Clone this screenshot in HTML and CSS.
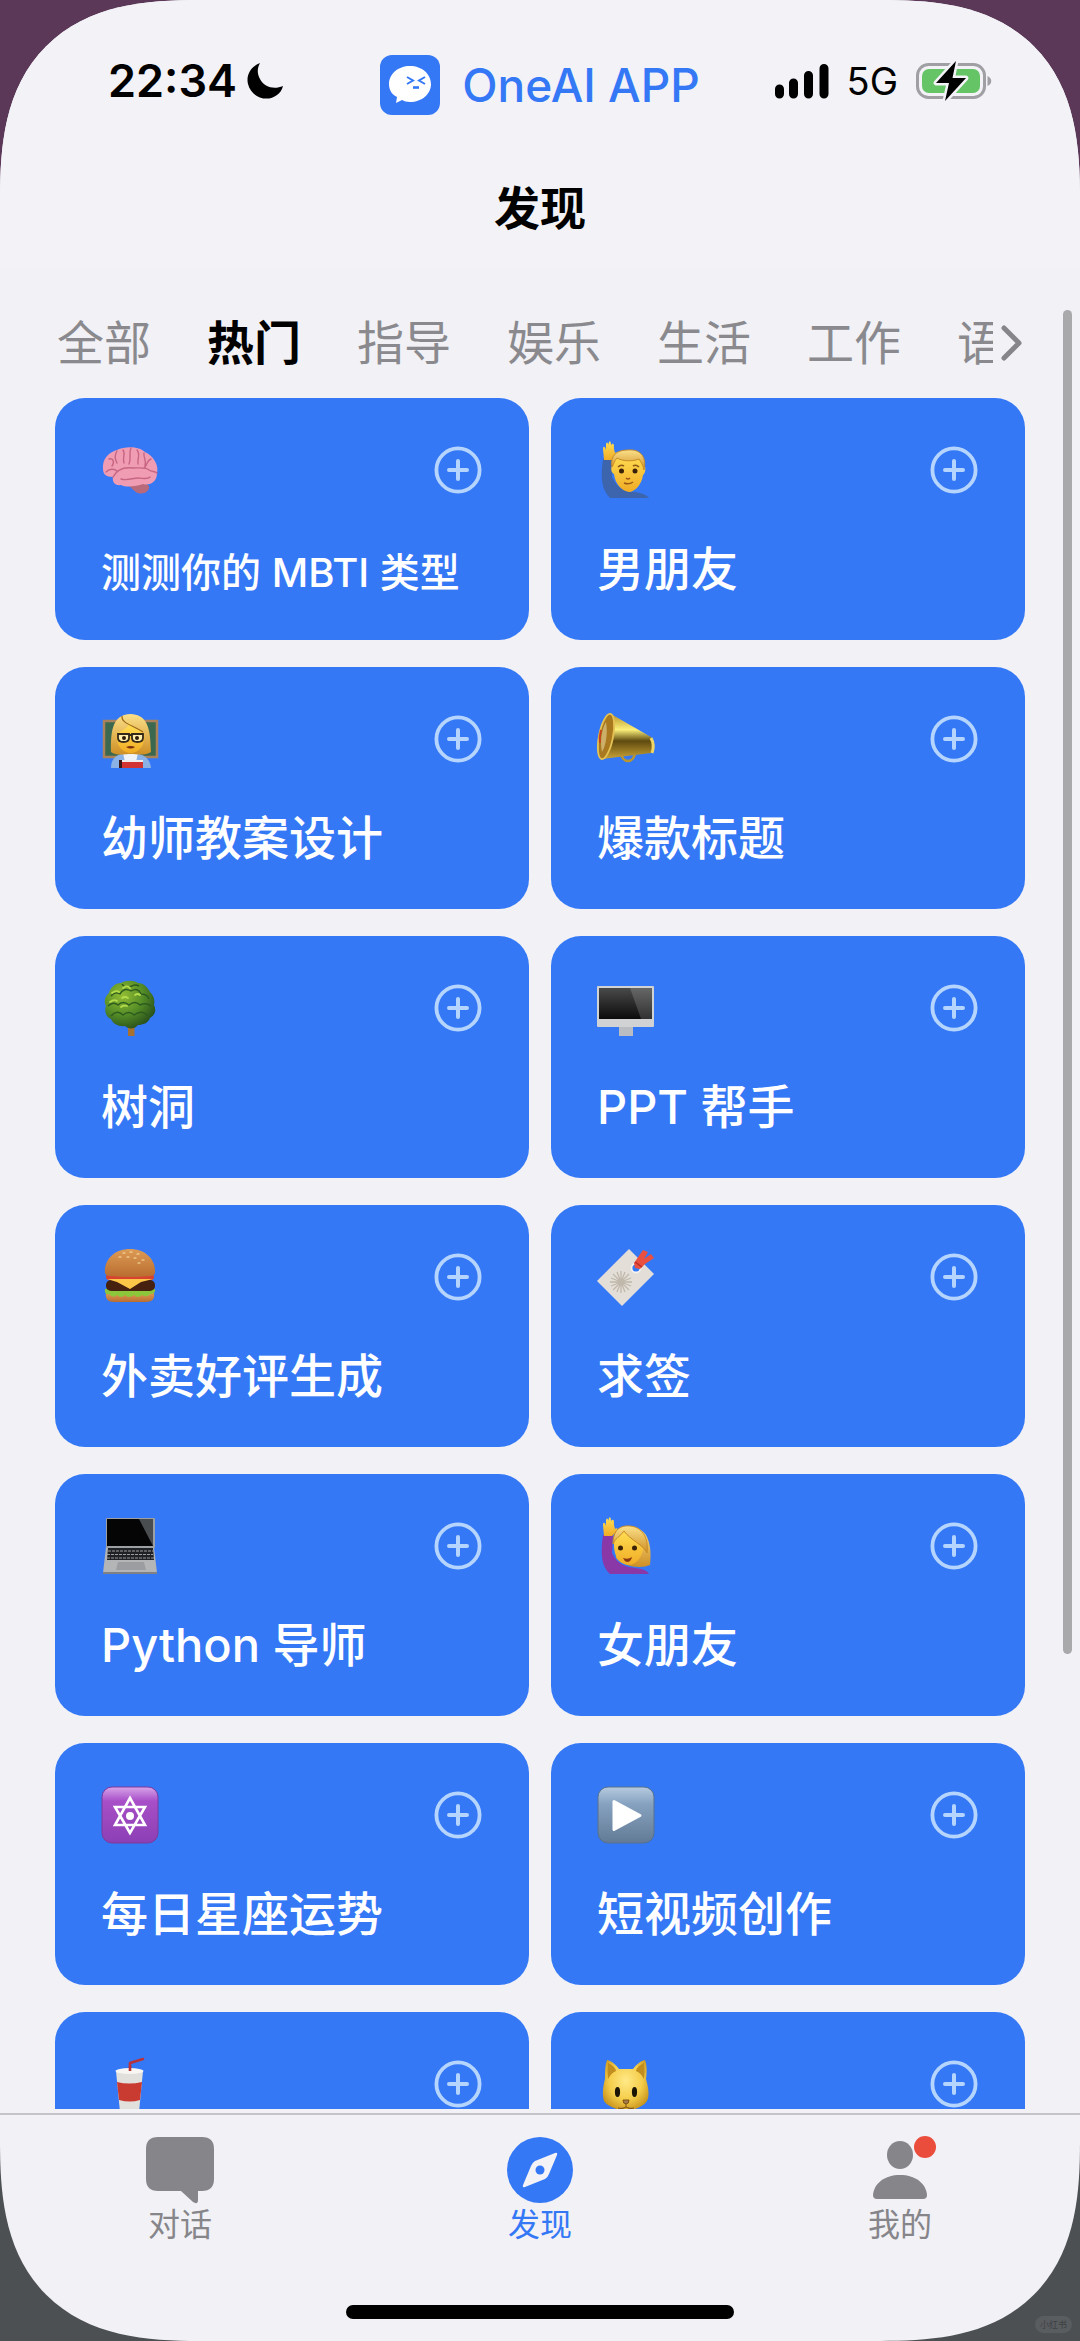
FILE: index.html
```html
<!DOCTYPE html>
<html lang="zh-CN">
<head>
    <meta charset="UTF-8">
    <meta name="viewport" content="width=device-width, initial-scale=1.0">
    <title>发现 - OneAI APP</title>
    <link rel="stylesheet" href="styles.css">
</head>
<body>

<!-- shared symbols -->
<svg class="defs" width="0" height="0" aria-hidden="true">
    <symbol id="plus" viewBox="0 0 48 48">
        <circle cx="24" cy="24" r="21.6" fill="none" stroke="#b5d5ff" stroke-width="3.8"/>
        <path d="M24 15v18M15 24h18" fill="none" stroke="#b5d5ff" stroke-width="4" stroke-linecap="round"/>
    </symbol>
    <linearGradient id="skin" x1="0" y1="0" x2="0" y2="1">
        <stop offset="0" stop-color="#ffdf55"/>
        <stop offset="1" stop-color="#f0ac25"/>
    </linearGradient>
    <linearGradient id="hair" x1="0" y1="0" x2="0" y2="1">
        <stop offset="0" stop-color="#fbe08a"/>
        <stop offset="1" stop-color="#cf8f24"/>
    </linearGradient>
    <linearGradient id="gold" x1="0" y1="0" x2="0" y2="1">
        <stop offset="0" stop-color="#b8922a"/>
        <stop offset=".35" stop-color="#fbf07a"/>
        <stop offset=".6" stop-color="#5f4a10"/>
        <stop offset="1" stop-color="#c9a336"/>
    </linearGradient>
    <linearGradient id="glass" x1="0" y1="0" x2="0" y2="1">
        <stop offset="0" stop-color="#4a4a4a"/>
        <stop offset="1" stop-color="#0b0b0b"/>
    </linearGradient>
    <linearGradient id="purple" x1="0" y1="0" x2="0" y2="1">
        <stop offset="0" stop-color="#d9a4ea"/>
        <stop offset=".25" stop-color="#a84fc8"/>
        <stop offset="1" stop-color="#8c3fb4"/>
    </linearGradient>
    <linearGradient id="steel" x1="0" y1="0" x2="0" y2="1">
        <stop offset="0" stop-color="#b7cbdf"/>
        <stop offset=".3" stop-color="#86a2c0"/>
        <stop offset="1" stop-color="#627a95"/>
    </linearGradient>
    <linearGradient id="bun" x1="0" y1="0" x2="0" y2="1">
        <stop offset="0" stop-color="#dd9b55"/>
        <stop offset="1" stop-color="#b96d30"/>
    </linearGradient>
    <radialGradient id="leaf" cx=".35" cy=".3" r=".75">
        <stop offset="0" stop-color="#93bd33"/>
        <stop offset=".55" stop-color="#558d27"/>
        <stop offset="1" stop-color="#284f1b"/>
    </radialGradient>
    <radialGradient id="cat" cx=".5" cy=".4" r=".6">
        <stop offset="0" stop-color="#ffe987"/>
        <stop offset=".6" stop-color="#f5cd4a"/>
        <stop offset="1" stop-color="#c8941c"/>
    </radialGradient>
</svg>

<div class="phone">
    <header class="header">
        <div class="status">
            <div class="status-left">
                <span class="time">22:34</span>
                <svg class="moon" viewBox="0 0 36 36"><path d="M13 0C3 4-1 13 1 21C4 34 20 40 30 32C33 30 35 27 36 23C27 27 17 24 13 16C10 11 10 5 13 0Z" fill="#000"/></svg>
            </div>
            <div class="brand">
                <svg class="logo" viewBox="0 0 60 60">
                    <rect width="60" height="60" rx="12" fill="#3478f6"/>
                    <path d="M30 11C42 11 51 19 51 29C51 39 42 47 30 47C27 47 24 46 22 45L16 48L17 42C11 39 9 34 9 29C9 19 18 11 30 11Z" fill="#fff"/>
                    <path d="M27 22l6 3.500l-6 3.500M45 22l-6 3.500l6 3.500" fill="none" stroke="#3478f6" stroke-width="2"/>
                    <path d="M33 32.500h6" stroke="#3478f6" stroke-width="2.600"/>
                </svg>
                <span>OneAI APP</span>
            </div>
            <div class="status-right">
                <svg class="signal" viewBox="0 0 54 34"><path d="M4.500 25v5M18.500 19v11M33.500 11.500v18.500M49 4.500v25.500" stroke="#000" stroke-width="9" stroke-linecap="round"/></svg>
                <span class="network">5G</span>
                <svg class="battery" viewBox="0 0 76 40">
                    <rect x="1.500" y="3.500" width="67" height="33" rx="11" fill="none" stroke="#a0a0a4" stroke-width="3"/>
                    <rect x="6" y="8" width="58" height="24" rx="7" fill="#65c466"/>
                    <path d="M71.500 15c5 2 5 8 0 10z" fill="#a0a0a4"/>
                    <path d="M40 0L20 22h13l-4 18L50 17H36.500z" fill="#000" stroke="#f2f2f7" stroke-width="5" stroke-linejoin="round" paint-order="stroke"/>
                </svg>
            </div>
        </div>
        <h1>发现</h1>
    </header>

    <main class="content">
        <div class="filter">
            <nav class="filter-list">
                <button type="button">全部</button>
                <button type="button" class="active">热门</button>
                <button type="button">指导</button>
                <button type="button">娱乐</button>
                <button type="button">生活</button>
                <button type="button">工作</button>
                <button type="button">语</button>
            </nav>
            <button type="button" class="more" aria-label="更多分类">
                <svg viewBox="0 0 32 40"><path d="M11 5L26 20L11 35" fill="none" stroke="#85858a" stroke-width="5" stroke-linecap="round" stroke-linejoin="round"/></svg>
            </button>
        </div>

        <div class="cards">
            <section class="card">
                <div class="card-top">
                    <svg class="emoji" viewBox="0 0 58 58">
                        <path d="M29 42C35 41 45 41 48 45C49 50 43 54 37 52C33 51 31 46 26 44Z" fill="#b8697a"/>
                        <path d="M2 28C1 18 8 11 16 9C24 5 38 5 44 11C53 15 58 25 56 32C56 41 49 45 42 43C36 45 26 47 20 44C14 45 11 41 12 36C5 36 2 33 2 28Z" fill="#f09db4"/>
                        <path d="M8 18c4-1 6 3 3 7M16 10c-3 5-2 8 0 12M22 9c3 4-1 8 1 13M30 7c-3 6 1 9-2 16M36 9c4 5 0 8 1 14M43 12c-1 5 3 7 1 13M50 18c-5 2-3 6-7 9M12 36c4-8 12-10 20-9c7 0 13-1 16 2c3 2 6 1 8 3M20 38c6 2 12-1 17-1s9 2 12-1M16 30c-3-3-8-2-11 1" fill="none" stroke="#c76583" stroke-width="1.400" stroke-linecap="round"/>
                    </svg>
                    <button type="button" class="add" aria-label="添加"><svg><use href="#plus"/></svg></button>
                </div>
                <h2 class="small">测测你的 MBTI 类型</h2>
            </section>
            <section class="card">
                <div class="card-top">
                    <svg class="emoji" viewBox="0 0 58 58">
                        <path d="M6 18L16 18L15 36C20 48 30 51 38 51C45 52 50 54 52 57H13C5 49 3 38 6 18Z" fill="#3d65ad"/>
                        <path d="M7 19L6 8C6 5 8 5 9 9L9 3C10 1 11 1 11 4L12 1C13-1 14 1 14 4L15 3C17 2 17 4 17 8L18 12C20 10 22 12 19 15L15 19Z" fill="url(#skin)"/>
                        <path d="M16 22C16 8 47 8 47 25C49 24 49 32 46 34C45 43 38 51 32 51C25 50 18 43 17 33C13 31 14 24 16 25Z" fill="url(#skin)"/>
                        <path d="M15 26C13 14 20 9 31 9C43 8 50 15 47 29C46 24 44 21 42 18C34 21 25 20 20 17C17 20 17 23 15 26Z" fill="url(#hair)" stroke="#c98b25" stroke-width="1"/>
                        <path d="M21 26q3-3 6-1M36 25q3-2 6 1" fill="none" stroke="#8d5a16" stroke-width="1.600"/>
                        <circle cx="24.500" cy="30" r="2.500" fill="#3b2108"/><circle cx="38" cy="30" r="2.500" fill="#3b2108"/>
                        <path d="M29 37q2 2 4 0M27 42q5 2 9-1" fill="none" stroke="#9a5a17" stroke-width="1.500"/>
                    </svg>
                    <button type="button" class="add" aria-label="添加"><svg><use href="#plus"/></svg></button>
                </div>
                <h2>男朋友</h2>
            </section>

            <section class="card">
                <div class="card-top">
                    <svg class="emoji" viewBox="0 0 58 58">
                        <rect x="3" y="11" width="53" height="36" fill="#3c6850" stroke="#a9825c" stroke-width="2.500"/>
                        <path d="M10 58C10 47 17 43 29 43S49 47 50 58Z" fill="#8ab2e6"/>
                        <path d="M22 43h15l-2 9H24z" fill="#f0f3f8"/>
                        <path d="M10 42C10 27 9 4 30 4C50 5 49 26 50 42C44 46 36 44 30 44S15 46 10 42Z" fill="url(#hair)"/>
                        <path d="M16 23C22 21 27 17 29 13C31 18 38 20 43 23C45 34 38 43 30 43C21 43 14 34 16 23Z" fill="url(#skin)"/>
                        <path d="M21 6C20 13 31 15 42 22" fill="none" stroke="#9d6a18" stroke-width="1.200"/>
                        <path d="M17 24h11v4q0 4-5.500 4T17 28zM31 24h11v4q0 4-5.500 4T31 28zM28 25h3" fill="#ffedac" stroke="#33281a" stroke-width="1.800"/>
                        <circle cx="23" cy="28" r="2" fill="#2c1a08"/><circle cx="36" cy="28" r="2" fill="#2c1a08"/>
                        <path d="M25 37q5 3 9 0q-4-2-9 0Z" fill="#7a3010"/>
                        <rect x="18" y="50" width="24" height="8" fill="#d23434"/>
                        <path d="M18 50h3v8h-3z" fill="#3b1717"/>
                        <path d="M21 50h21v2H21z" fill="#eee"/>
                    </svg>
                    <button type="button" class="add" aria-label="添加"><svg><use href="#plus"/></svg></button>
                </div>
                <h2>幼师教案设计</h2>
            </section>
            <section class="card">
                <div class="card-top">
                    <svg class="emoji" viewBox="0 0 58 58">
                        <path d="M24 42c0 12 14 12 14 0" fill="none" stroke="#b9962f" stroke-width="2.600"/>
                        <path d="M14 4L54 27Q58 35 54 43L5 49Z" fill="url(#gold)"/>
                        <ellipse cx="9" cy="26.500" rx="7" ry="23" transform="rotate(11 9 26.500)" fill="#a9791f" stroke="#e5c254" stroke-width="1.800"/>
                        <path d="M9 12C4 20 3 34 5 42C9 35 11 23 9 12Z" fill="#ccb06a"/>
                        <path d="M4 20Q2 27 3 33" stroke="#c8421c" stroke-width="2" fill="none"/>
                        <path d="M54 28q4 7 1 15" stroke="#f0d665" stroke-width="3" fill="none"/>
                    </svg>
                    <button type="button" class="add" aria-label="添加"><svg><use href="#plus"/></svg></button>
                </div>
                <h2>爆款标题</h2>
            </section>

            <section class="card">
                <div class="card-top">
                    <svg class="emoji" viewBox="0 0 58 58">
                        <path d="M27 44h6.500v13H27z" fill="#a8712e"/>
                        <path d="M20 4C25 1 33 1 37 4C43 4 47 9 49 13C53 17 54 21 53 26C56 32 53 37 49 39C47 44 42 46 37 46C33 51 27 50 24 47C18 48 12 45 10 40C5 38 3 32 5 27C2 22 5 16 8 14C9 9 14 4 20 4Z" fill="url(#leaf)"/>
                        <path d="M10 17q4-5 9-2q4-7 11-3q7-4 10 3q6 0 8 5M7 27q5-5 10-1q5-5 11 0q6-5 11 0q6-3 11 1M10 37q6-7 12-1q6-5 11 0q8-6 14 1M21 5q3 5 10 2q3-2 7 0" fill="none" stroke="#2d5c1e" stroke-width="1.400"/>
                        <path d="M11 14q4-3 7-1M22 9q4-3 7 0M9 23q4-3 7-1M21 19q3-2 6 0M20 28q3-2 6-1M34 16q3-2 5 0" fill="none" stroke="#b4dc4b" stroke-width="1.800" stroke-linecap="round"/>
                    </svg>
                    <button type="button" class="add" aria-label="添加"><svg><use href="#plus"/></svg></button>
                </div>
                <h2>树洞</h2>
            </section>
            <section class="card">
                <div class="card-top">
                    <svg class="emoji" viewBox="0 0 58 58">
                        <path d="M22 47h14v10H22z" fill="#b9bcc0"/>
                        <rect y="7" width="57" height="41" rx="1" fill="#d0d2d4"/>
                        <rect x="2" y="9" width="53" height="31" fill="url(#glass)"/>
                        <path d="M33 9h22v31H44z" fill="#fff" opacity=".16"/>
                    </svg>
                    <button type="button" class="add" aria-label="添加"><svg><use href="#plus"/></svg></button>
                </div>
                <h2>PPT 帮手</h2>
            </section>

            <section class="card">
                <div class="card-top">
                    <svg class="emoji" viewBox="0 0 58 58">
                        <path d="M5 45h48c1 6-2 9-8 9H13c-6 0-9-3-8-9z" fill="url(#bun)"/>
                        <path d="M4 41q-1 6 4 5q4 5 8 1q4 4 8 0q4 4 9 0q4 4 8 0q5 3 8-1q6 0 5-5z" fill="#8cc63a"/>
                        <rect x="5" y="32" width="49" height="11" rx="5" fill="#46210f"/>
                        <rect x="5" y="26" width="48" height="6" rx="3" fill="#d8432f"/>
                        <path d="M6 31h46l-12 3l-11 7l-13-7z" fill="#fcc648"/>
                        <path d="M4 25C3 10 15 1 29 1S55 10 54 25q-1 3-5 3q-20 2-40 0q-4 0-5-3z" fill="url(#bun)"/>
                        <path d="M22 5h2M29 4h2M36 6h2M26 9h2M33 10h2M41 12h2M18 9h2M37 15h2" stroke="#fbe3a6" stroke-width="1.200" stroke-linecap="round"/>
                    </svg>
                    <button type="button" class="add" aria-label="添加"><svg><use href="#plus"/></svg></button>
                </div>
                <h2>外卖好评生成</h2>
            </section>
            <section class="card">
                <div class="card-top">
                    <svg class="emoji" viewBox="0 0 58 58">
                        <path d="M32 1L57 26L25 58L0 33Z" fill="#e3ded7"/>
                        <path d="M24 23v22M13 34h22M16 26l16 16M32 26l-16 16M20 24l8 20M28 24l-8 20M14 30l20 8M14 38l20-8" stroke="#bfb8ab" stroke-width="1.300"/>
                        <circle cx="39" cy="20" r="4.500" fill="#3478f6" stroke="#f5f3ef" stroke-width="1.800"/>
                        <path d="M37 15l9-13l5 2l-4 7l7-5l3 4l-9 6l-5 5l-5-1z" fill="#e9503f"/>
                        <path d="M38 14l7 5" stroke="#b92c27" stroke-width="1.500"/>
                    </svg>
                    <button type="button" class="add" aria-label="添加"><svg><use href="#plus"/></svg></button>
                </div>
                <h2>求签</h2>
            </section>

            <section class="card">
                <div class="card-top">
                    <svg class="emoji" viewBox="0 0 58 58">
                        <path d="M5 30h48l3 26H2z" fill="#b4b5b7"/>
                        <rect x="5" y="1" width="49" height="30" rx="1" fill="#9da0a3"/>
                        <path d="M6 2h46v27H6z" fill="#050505"/>
                        <path d="M38 2h14v27z" fill="#4a4d50"/>
                        <path d="M7 31h45l1 12H6z" fill="#202124"/>
                        <path d="M7 34h45M6 37.500h46M6 41h47" stroke="#9b9da0" stroke-width="1" stroke-dasharray="3 1"/>
                        <path d="M17 45h26l2 8H15z" fill="#9c9da0"/>
                        <path d="M2 55h54v2H2z" fill="#7f8184"/>
                    </svg>
                    <button type="button" class="add" aria-label="添加"><svg><use href="#plus"/></svg></button>
                </div>
                <h2>Python 导师</h2>
            </section>
            <section class="card">
                <div class="card-top">
                    <svg class="emoji" viewBox="0 0 58 58">
                        <path d="M21 20C23 3 44 8 50 20C54 29 54 38 53 48C44 52 27 50 19 41Z" fill="url(#hair)"/>
                        <path d="M6 18L16 18L15 36C20 48 30 50 38 51C45 52 50 53 52 57H13C5 50 3 38 6 18Z" fill="#8a37a8"/>
                        <path d="M7 19L6 8C6 5 8 5 9 9L9 3C10 1 11 1 11 4L12 1C13-1 14 1 14 4L15 3C17 2 17 4 17 8L18 12C20 10 22 12 19 15L15 19Z" fill="url(#skin)"/>
                        <path d="M17 28C16 16 24 11 33 13C43 14 47 22 46 33C44 42 38 48 31 48C22 47 17 39 17 28Z" fill="url(#skin)"/>
                        <path d="M16 27C16 13 23 8 33 9C44 10 52 19 50 36C47 28 33 23 27 14C23 20 18 21 16 27Z" fill="url(#hair)" stroke="#c98b25" stroke-width="1"/>
                        <circle cx="23.500" cy="31" r="2.500" fill="#3b2108"/><circle cx="37.500" cy="31" r="2.500" fill="#3b2108"/>
                        <path d="M26 41q5 2 9-1q-1 5-5 5q-3-1-4-4z" fill="#8a3814"/>
                    </svg>
                    <button type="button" class="add" aria-label="添加"><svg><use href="#plus"/></svg></button>
                </div>
                <h2>女朋友</h2>
            </section>

            <section class="card">
                <div class="card-top">
                    <svg class="emoji" viewBox="0 0 58 58">
                        <rect x="1" y="1" width="56" height="56" rx="10" fill="url(#purple)" stroke="#7b3b9d" stroke-width="1"/>
                        <path d="M29 12L44 39H14ZM29 47L14 21H44Z" fill="none" stroke="#fff" stroke-width="2.600"/>
                        <circle cx="29" cy="30" r="4" fill="#fff"/>
                    </svg>
                    <button type="button" class="add" aria-label="添加"><svg><use href="#plus"/></svg></button>
                </div>
                <h2>每日星座运势</h2>
            </section>
            <section class="card">
                <div class="card-top">
                    <svg class="emoji" viewBox="0 0 58 58">
                        <rect x="1" y="1" width="56" height="56" rx="10" fill="url(#steel)" stroke="#55708e" stroke-width="1"/>
                        <path d="M17 15.500L43 29.500L17 43.500Z" fill="#fff" stroke="#fff" stroke-width="3" stroke-linejoin="round"/>
                    </svg>
                    <button type="button" class="add" aria-label="添加"><svg><use href="#plus"/></svg></button>
                </div>
                <h2>短视频创作</h2>
            </section>

            <section class="card">
                <div class="card-top">
                    <svg class="emoji" viewBox="0 0 58 58">
                        <path d="M29 16V8L42 4" fill="none" stroke="#b9323a" stroke-width="2.600" stroke-linejoin="round" stroke-linecap="round"/>
                        <path d="M15 16h27l-4 41H19z" fill="#e2e0dc"/>
                        <ellipse cx="28.500" cy="16" rx="14" ry="3" fill="#f7f6f3"/>
                        <path d="M16 27q12 3 25 0l-2 18q-10 3-21 0z" fill="#c93a31"/>
                        <path d="M29 16V11" stroke="#b9323a" stroke-width="2.600"/>
                    </svg>
                    <button type="button" class="add" aria-label="添加"><svg><use href="#plus"/></svg></button>
                </div>
            </section>
            <section class="card">
                <div class="card-top">
                    <svg class="emoji" viewBox="0 0 58 58">
                        <path d="M8 24C8 16 8 10 10 5C15 6 19 10 22 14H36C39 10 43 6 48 5C50 10 50 17 49 24C51 31 53 40 50 46C46 52 38 54 29 57C20 54 11 52 7 46C5 40 6 31 8 24Z" fill="url(#cat)"/>
                        <path d="M11 8q7 3 8 8q-5 2-8 8q-1-9 0-16zM47 8q-7 3-8 8q5 2 8 8q1-9 0-16z" fill="#c18d1f"/>
                        <ellipse cx="20.500" cy="37" rx="2.600" ry="5" fill="#1c1405"/>
                        <ellipse cx="37.500" cy="37" rx="2.600" ry="5" fill="#1c1405"/>
                        <path d="M26 45h6q0 4-3 4t-3-4zM29 49v3M29 52q-4 3-8 1M29 52q4 3 8 1" fill="#a07a4e" stroke="#80540f" stroke-width="1"/>
                    </svg>
                    <button type="button" class="add" aria-label="添加"><svg><use href="#plus"/></svg></button>
                </div>
            </section>
        </div>
        <div class="scrollbar"></div>
    </main>

    <footer class="tabbar">
        <nav class="tabs">
            <a href="#chat">
                <svg viewBox="0 0 68 66"><path d="M12 0H56Q68 0 68 12V42Q68 54 56 54H52V63Q52 68 47 65L35 54H12Q0 54 0 42V12Q0 0 12 0Z" fill="#86858a"/></svg>
                <span>对话</span>
            </a>
            <a href="#discover" class="active">
                <svg viewBox="0 0 66 66">
                    <circle cx="33" cy="33" r="33" fill="#3478f6"/>
                    <path d="M48 16Q51 15 50 18L42 37Q41 40 38 42L18 50Q15 51 16 48L24 29Q25 26 28 24Z" fill="#f2f2f7"/>
                    <circle cx="33" cy="33" r="4.500" fill="#3478f6"/>
                </svg>
                <span>发现</span>
            </a>
            <a href="#me">
                <svg viewBox="0 0 66 66">
                    <ellipse cx="33" cy="18" rx="13" ry="14" fill="#86858a"/>
                    <path d="M6 58C7 46 18 38 33 38S59 46 60 58Q60 62 56 62H10Q6 62 6 58Z" fill="#86858a"/>
                    <circle cx="58" cy="10" r="11" fill="#eb4d3d"/>
                </svg>
                <span>我的</span>
            </a>
        </nav>
        <div class="home-bar"></div>
    </footer>
</div>
<span class="watermark">小红书</span>

</body>
</html>
```

FILE: styles.css
```css
* {
    box-sizing: border-box;
}
body {
    margin: 0;
    font-family: Inter, "Noto Sans CJK SC", sans-serif;
    background: linear-gradient(#5b3858 50%, #4d5053 50%);
    color: #000;
}
button {
    margin: 0;
    padding: 0;
    border: 0;
    background: none;
    font-family: inherit;
    cursor: pointer;
}
svg {
    display: block;
    overflow: visible;
}
.defs {
    position: absolute;
}
.phone {
    display: flex;
    flex-direction: column;
    height: 100vh;
    overflow: hidden;
    background-color: #f1f1f6;
    border-radius: 160px;
}
@supports (corner-shape: superellipse(1.4)) {
    .phone {
        border-radius: 200px;
        corner-shape: superellipse(1.4);
    }
}

/* header */
.header {
    padding: 55px 0 30px;
    background-color: #f2f2f7;
}
.status {
    display: grid;
    grid-template-columns: 1fr auto 1fr;
    align-items: start;
}
.status-left,
.status-right {
    display: flex;
    align-items: center;
    height: 52px;
}
.status-left {
    gap: 10px;
    padding-left: 108px;
}
.time {
    font-size: 45px;
    font-weight: 600;
    line-height: 52px;
}
.moon {
    width: 36px;
    height: 36px;
}
.brand {
    display: flex;
    align-items: center;
    gap: 22px;
    height: 60px;
    font-size: 46px;
    font-weight: 500;
    color: #3478f6;
}
.logo {
    width: 60px;
    height: 60px;
}
.status-right {
    justify-content: flex-end;
    gap: 18px;
    padding-right: 88px;
}
.signal {
    width: 54px;
    height: 34px;
}
.network {
    font-size: 38px;
}
.battery {
    width: 76px;
    height: 40px;
}
h1 {
    margin: 63px 0 0;
    font-size: 46px;
    font-weight: 600;
    line-height: 60px;
    text-align: center;
}

/* filter row */
.content {
    position: relative;
    flex: 1;
    min-height: 0;
    overflow: hidden;
    padding: 45px 55px 0;
}
.filter {
    display: flex;
    align-items: center;
}
.filter-list {
    display: flex;
    flex: 1;
    min-width: 0;
    gap: 56px;
    padding-left: 2px;
    overflow: hidden;
}
.filter-list button {
    flex-shrink: 0;
    font-size: 47px;
    line-height: 60px;
    color: #8a8a8e;
}
.filter-list .active {
    font-weight: 600;
    color: #000;
}
.more svg {
    width: 32px;
    height: 40px;
}

/* cards */
.cards {
    display: grid;
    grid-template-columns: 1fr 1fr;
    gap: 27px 22px;
    margin-top: 25px;
}
.card {
    height: 242px;
    padding: 43px 47px 0 46px;
    border-radius: 30px;
    background-color: #3478f6;
    color: #fff;
}
.card-top {
    display: flex;
    align-items: center;
    justify-content: space-between;
}
.emoji {
    width: 58px;
    height: 58px;
}
.add svg {
    width: 48px;
    height: 48px;
}
.card h2 {
    margin: 40px 0 0;
    font-size: 47px;
    font-weight: 500;
    line-height: 60px;
    white-space: nowrap;
}
.card .small {
    font-size: 40px;
    line-height: 68px;
}
.scrollbar {
    position: absolute;
    top: 42px;
    right: 8px;
    width: 9px;
    height: 73%;
    border-radius: 5px;
    background-color: #a9a9ac;
}

/* tab bar */
.tabbar {
    margin-top: 4px;
    padding: 22px 0;
    border-top: 2px solid #c4c4c9;
}
.tabs {
    display: grid;
    grid-template-columns: repeat(3, 1fr);
}
.tabs a {
    display: flex;
    flex-direction: column;
    align-items: center;
    font-size: 32px;
    line-height: 44px;
    color: #86858a;
    text-decoration: none;
}
.tabs svg {
    height: 66px;
}
.tabs .active {
    color: #3478f6;
}
.home-bar {
    width: 36%;
    height: 14px;
    margin: 58px auto 0;
    border-radius: 7px;
    background-color: #000;
}
.watermark {
    position: absolute;
    right: 8px;
    bottom: 8px;
    padding: 0 5px;
    border-radius: 9px;
    background-color: #5a5d60;
    font-size: 9px;
    line-height: 17px;
    color: #3e4144;
}
```
